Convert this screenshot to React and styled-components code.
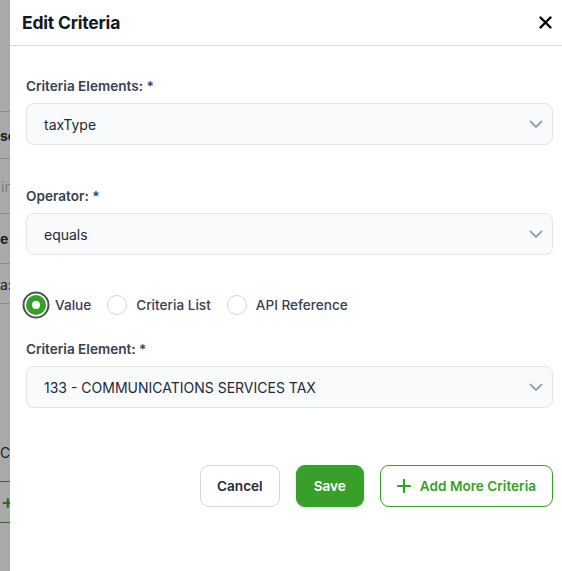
import React, { useState } from "react";
import styled, { createGlobalStyle } from "styled-components";

const Global = createGlobalStyle`
  html, body { margin: 0; padding: 0; }
  body {
    font-family: Inter, "Noto Sans", "Liberation Sans", sans-serif;
    background: #a9a9a9;
    width: 562px;
    height: 571px;
    overflow: hidden;
  }
  * { box-sizing: border-box; }
`;

/* ---------- page underneath the drawer (seen through the backdrop) ---------- */
const Page = styled.div`
  width: 562px;
  height: 571px;
  background: #a9a9a9;
  display: flex;
  flex-direction: column;
  overflow: hidden;
`;

const PageRow = styled.div`
  height: ${(p) => p.$h}px;
  flex: none;
  display: flex;
  align-items: ${(p) => p.$align || "center"};
  padding-bottom: ${(p) => p.$pb || 0}px;
  padding-top: ${(p) => p.$pt || 0}px;
  border-bottom: 1px solid ${(p) => (p.$green ? "#2d6a24" : p.$line ? "#8c8c8c" : "transparent")};
  overflow: hidden;
`;

const PageText = styled.span`
  white-space: nowrap;
  font-size: ${(p) => p.$size || 14}px;
  font-weight: ${(p) => p.$weight || 400};
  color: ${(p) => p.$color || "#1b1f24"};
  margin-left: ${(p) => p.$ml || 0}px;
`;

/* ---------- drawer ---------- */
const Drawer = styled.aside`
  position: fixed;
  top: 0;
  right: 0;
  width: 552px;
  height: 571px;
  background: #ffffff;
  display: flex;
  flex-direction: column;
`;

const Header = styled.header`
  height: 46px;
  flex: none;
  display: flex;
  align-items: center;
  justify-content: space-between;
  padding: 0 10px 0 12px;
  border-bottom: 1px solid #d6d9de;
`;

const Title = styled.h2`
  margin: 0;
  font-size: 17.5px;
  font-weight: 700;
  color: #111827;
  letter-spacing: -0.2px;
`;

const CloseButton = styled.button`
  border: none;
  background: none;
  padding: 0;
  width: 14px;
  height: 14px;
  display: flex;
  align-items: center;
  justify-content: center;
  color: #000;
  cursor: pointer;
`;

const Body = styled.div`
  display: flex;
  flex-direction: column;
  padding: 30px 9px 0 16px;
`;

const Field = styled.div`
  display: flex;
  flex-direction: column;
  gap: 7px;
  margin-top: ${(p) => p.$mt || 0}px;
`;

const Label = styled.label`
  font-size: 13.6px;
  line-height: 20px;
  font-weight: 600;
  color: #374151;
`;

const SelectBox = styled.div`
  height: 42px;
  border: 1px solid #e3e5e9;
  border-radius: 8px;
  background: #f9fafb;
  display: flex;
  align-items: center;
  justify-content: space-between;
  padding: 0 9px 0 17px;
  color: #1f2937;
`;

const SelectValue = styled.span`
  font-size: 14px;
  letter-spacing: 0;
`;

const RadioGroup = styled.div`
  display: flex;
  align-items: center;
  gap: 16px;
  margin-top: 38px;
  height: 24px;
`;

const RadioOption = styled.label`
  display: flex;
  align-items: center;
  gap: 9px;
  font-size: 13.6px;
  font-weight: 500;
  color: #374151;
  cursor: pointer;
`;

const RadioCircle = styled.span`
  width: 20px;
  height: 20px;
  border-radius: 50%;
  flex: none;
  display: flex;
  align-items: center;
  justify-content: center;
  background: ${(p) => (p.$on ? "#38a02a" : "#fff")};
  border: ${(p) => (p.$on ? "none" : "1px solid #d3d6db")};
  box-shadow: ${(p) => (p.$on ? "0 0 0 1.5px #fff, 0 0 0 3.5px #4a5352" : "none")};
  &::after {
    content: "";
    display: ${(p) => (p.$on ? "block" : "none")};
    width: 8px;
    height: 8px;
    border-radius: 50%;
    background: #fff;
  }
`;

const Actions = styled.div`
  display: flex;
  justify-content: flex-end;
  gap: 16px;
  margin-top: 57px;
`;

const Button = styled.button`
  height: 42px;
  border-radius: 9px;
  font-family: inherit;
  font-size: 13.6px;
  font-weight: 600;
  display: flex;
  align-items: center;
  justify-content: center;
  gap: 9px;
  cursor: pointer;
  padding: 0 ${(p) => p.$px || 16}px;
  ${(p) =>
    p.$variant === "primary"
      ? `background:#38a02a;color:#fff;border:1px solid #38a02a;box-shadow:0 1px 3px rgba(0,0,0,0.18);`
      : p.$variant === "outline"
      ? `background:#fff;color:#38a02a;border:1px solid #38a02a;`
      : `background:#fff;color:#1f2937;border:1px solid #d3d6db;`}
`;

const Chevron = () => (
  <svg width="14" height="9" viewBox="0 0 14 9" fill="none">
    <path d="M1.5 1.5 L7 7 L12.5 1.5" stroke="#9ca3af" strokeWidth="2" strokeLinecap="round" strokeLinejoin="round" />
  </svg>
);

const XIcon = () => (
  <svg width="13" height="13" viewBox="0 0 13 13" fill="none">
    <path d="M1.5 1.5 L11.5 11.5 M11.5 1.5 L1.5 11.5" stroke="#000" strokeWidth="2.4" strokeLinecap="round" />
  </svg>
);

const PlusIcon = () => (
  <svg width="14" height="14" viewBox="0 0 14 14" fill="none">
    <path d="M7 1 V13 M1 7 H13" stroke="#38a02a" strokeWidth="2.2" strokeLinecap="round" />
  </svg>
);

export default function App() {
  const [mode, setMode] = useState("value");
  const options = [
    { id: "value", label: "Value" },
    { id: "list", label: "Criteria List" },
    { id: "api", label: "API Reference" },
  ];
  return (
    <>
      <Global />
      <Page>
        <PageRow $h={112} $line />
        <PageRow $h={47} $line>
          <PageText $weight={700}>sc</PageText>
        </PageRow>
        <PageRow $h={55} $line>
          <PageText $color="#7d7d7d" $ml={1}>in</PageText>
        </PageRow>
        <PageRow $h={50} $line>
          <PageText $weight={700}>e</PageText>
        </PageRow>
        <PageRow $h={40} $line $align="flex-start" $pt={12}>
          <PageText>a:</PageText>
        </PageRow>
        <PageRow $h={178} $green $align="flex-end" $pb={20}>
          <PageText>CT</PageText>
        </PageRow>
        <PageRow $h={41} $green>
          <PageText $size={20} $weight={600} $color="#2d6a24" $ml={1}>+</PageText>
        </PageRow>
      </Page>

      <Drawer>
        <Header>
          <Title>Edit Criteria</Title>
          <CloseButton aria-label="Close">
            <XIcon />
          </CloseButton>
        </Header>
        <Body>
          <Field>
            <Label>Criteria Elements: *</Label>
            <SelectBox>
              <SelectValue>taxType</SelectValue>
              <Chevron />
            </SelectBox>
          </Field>
          <Field $mt={41}>
            <Label>Operator: *</Label>
            <SelectBox>
              <SelectValue>equals</SelectValue>
              <Chevron />
            </SelectBox>
          </Field>
          <RadioGroup>
            {options.map((o) => (
              <RadioOption key={o.id} onClick={() => setMode(o.id)}>
                <RadioCircle $on={mode === o.id} />
                {o.label}
              </RadioOption>
            ))}
          </RadioGroup>
          <Field $mt={22}>
            <Label>Criteria Element: *</Label>
            <SelectBox>
              <SelectValue>133 - COMMUNICATIONS SERVICES TAX</SelectValue>
              <Chevron />
            </SelectBox>
          </Field>
          <Actions>
            <Button $px={16}>Cancel</Button>
            <Button $variant="primary" $px={17}>Save</Button>
            <Button $variant="outline" $px={16}>
              <PlusIcon />
              Add More Criteria
            </Button>
          </Actions>
        </Body>
      </Drawer>
    </>
  );
}
